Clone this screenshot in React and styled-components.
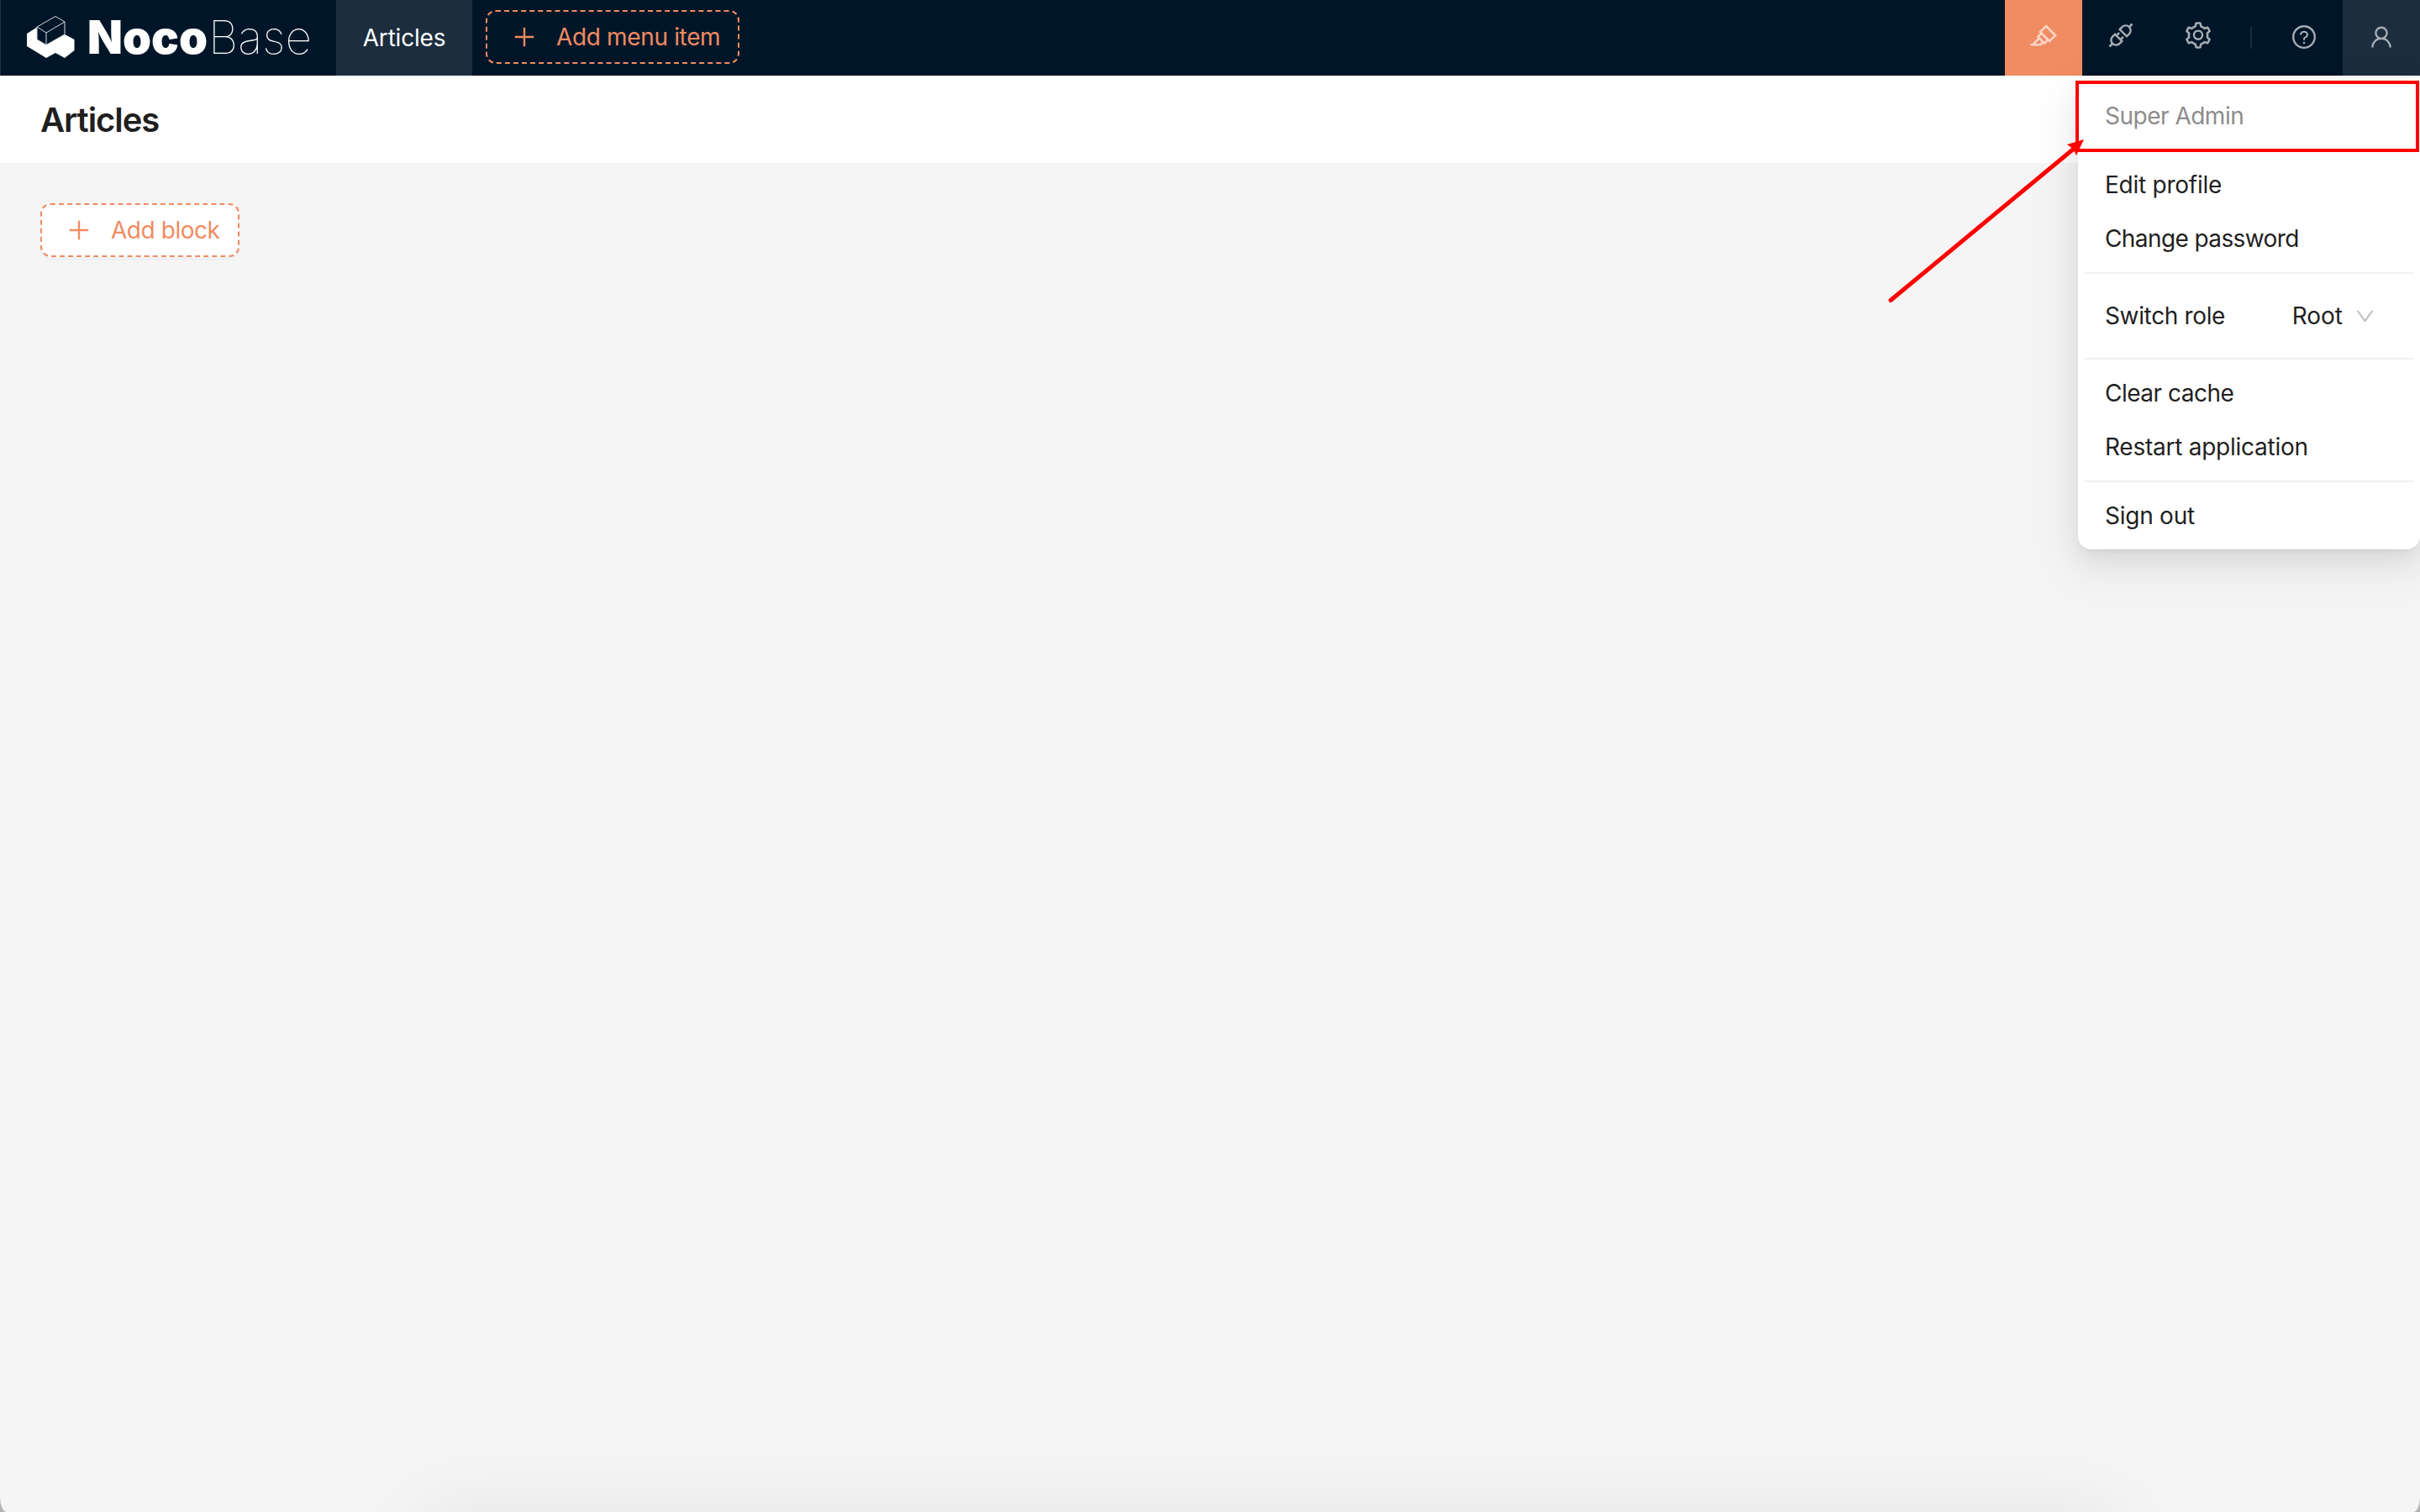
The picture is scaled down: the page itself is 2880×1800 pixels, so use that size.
import React from 'react';
import styled, {createGlobalStyle} from 'styled-components';
import {
  AiOutlineApi,
  AiOutlineDown,
  AiOutlineHighlight,
  AiOutlinePlus,
  AiOutlineQuestionCircle,
  AiOutlineSetting,
  AiOutlineUser,
} from 'react-icons/ai';

const GlobalStyle = createGlobalStyle`
  * {
    box-sizing: border-box;
  }

  body {
    margin: 0;
    background: #b4b4b4;
    color: #1f1f1f;
    font-family: Inter, "Liberation Sans", sans-serif;
    font-size: 28px;
  }
`;

const Window = styled.div`
  position: relative;
  display: flex;
  flex-direction: column;
  width: 2880px;
  height: 1800px;
  overflow: hidden;
  background: #f5f5f5;
  border-radius: 0 0 8px 8px / 0 0 18px 18px;
`;

const Header = styled.header`
  display: flex;
  height: 90px;
  background: #001628;
  box-shadow: inset 1px 0 rgba(255, 255, 255, 0.12), inset 0 -1px #000c1c;
`;

const LogoLink = styled.div`
  width: 400px;
  padding: 4px 0 0 32px;

  svg {
    display: block;
  }
`;

const Tab = styled.div`
  display: flex;
  align-items: center;
  justify-content: center;
  width: 162px;
  height: 90px;
  padding-bottom: 1px;
  background: #1c2d3e;
  color: #fff;
  letter-spacing: -0.2px;
`;

const DashedButton = styled.button`
  display: flex;
  align-items: center;
  width: ${({$width}) => $width}px;
  height: 64px;
  padding: 0 0 0 28px;
  border: 2px dashed #f18b62;
  border-radius: 12px;
  background: ${({$filled}) => $filled ? '#fff' : 'transparent'};
  box-shadow: ${({$filled}) => $filled ? '0 4px 0 rgba(0, 0, 0, 0.02)' : 'none'};
  color: #f18b62;
  font: inherit;
  letter-spacing: ${({$spacing}) => $spacing || 0}px;
  white-space: nowrap;

  svg {
    flex: none;
    margin-right: 22px;
  }
`;

const MenuButton = styled(DashedButton)`
  margin: 12px 0 0 16px;
`;

const Actions = styled.div`
  display: flex;
  margin-left: auto;
`;

const Action = styled.div`
  display: flex;
  justify-content: center;
  width: 92px;
  height: 90px;
  padding-top: ${({$top}) => $top || 24}px;
  background: ${({$background}) => $background || 'transparent'};
  color: ${({$bright}) => $bright ? 'rgba(255, 255, 255, 0.65)' : '#a6adb4'};
`;

const Separator = styled.div`
  width: 2px;
  height: 26px;
  margin: 32px 16px 0;
  background: #1a2c3e;
`;

const PageHeader = styled.div`
  display: flex;
  align-items: center;
  height: 104px;
  padding: 2px 48px 0;
  background: #fff;
`;

const Title = styled.h1`
  margin: 0;
  font-size: 40px;
  font-weight: 600;
  line-height: 56px;
  letter-spacing: -1.05px;
`;

const Content = styled.main`
  flex: 1;
  padding: 48px;
`;

const Menu = styled.div`
  position: absolute;
  top: 98px;
  right: 0;
  width: 407px;
  padding: 8px;
  background: #fff;
  border-radius: 16px;
  box-shadow: 0 12px 32px 0 rgba(0, 0, 0, 0.08), 0 6px 12px -8px rgba(0, 0, 0, 0.12), 0 18px 56px 16px rgba(0, 0, 0, 0.05);
`;

const MenuItem = styled.div`
  display: flex;
  align-items: center;
  height: ${({$height}) => $height || 64}px;
  padding: 0 24px;
  color: ${({$disabled}) => $disabled ? '#8c8c8c' : '#1f1f1f'};
  letter-spacing: ${({$spacing}) => $spacing || 0}px;
`;

const Divider = styled.div`
  height: 2px;
  margin: 8px 0;
  background: #f0f0f0;
`;

const Role = styled.div`
  display: flex;
  align-items: center;
  gap: 13px;
  margin-left: auto;
  padding-right: 20px;
  letter-spacing: 0;

  svg {
    color: #bfbfbf;
  }
`;

const Highlight = styled.div`
  position: absolute;
  top: 96px;
  left: 2470px;
  width: 409px;
  height: 85px;
  border: 4px solid #ff0000;
`;

const Arrow = styled.svg`
  position: absolute;
  top: 160px;
  left: 2240px;
`;

const DockShadow = styled.div`
  position: absolute;
  top: 1800px;
  left: 500px;
  width: 2020px;
  height: 100px;
  box-shadow: 0 0 90px rgba(0, 0, 0, 0.07);
`;

const Logo = () => (
  <svg width="350" height="80" viewBox="0 -14 350 80">
    <path
      d="M0 22 L12 14.5 V29 L23 35 L45 23 L56.500 29 V42 L45 51 L34 45 L23 51 L0 37 Z"
      fill="#fff"
    />
    <path
      d="M12 14 L34 1.500 L45 8 V23 L23 35.500 L12 29 Z M12 14 L23 21 L45 8 M23 21 V35"
      fill="#001628"
      stroke="#d5d9dd"
      strokeWidth="1"
    />
    <text x="72" y="45.500" fill="#fff" fontFamily="Inter" fontSize="54.500" fontWeight="900" textLength="143" lengthAdjust="spacingAndGlyphs">Noco</text>
    <text x="216" y="45.500" fill="#fff" fontFamily="Inter" fontSize="54.500" fontWeight="100" textLength="123" lengthAdjust="spacingAndGlyphs">Base</text>
  </svg>
);

const App = () => (
  <>
    <GlobalStyle />
    <Window>
      <Header>
        <LogoLink><Logo /></LogoLink>
        <Tab>Articles</Tab>
        <MenuButton $width={302} $spacing={-0.35}>
          <AiOutlinePlus size={32} />
          Add menu item
        </MenuButton>
        <Actions>
          <Action $background="#f18b62" $bright><AiOutlineHighlight size={36} /></Action>
          <Action><AiOutlineApi size={36} /></Action>
          <Action><AiOutlineSetting size={36} /></Action>
          <Separator />
          <Action $top={28}><AiOutlineQuestionCircle size={32} /></Action>
          <Action $top={28} $background="#1c2d3e"><AiOutlineUser size={32} /></Action>
        </Actions>
      </Header>
      <PageHeader>
        <Title>Articles</Title>
      </PageHeader>
      <Content>
        <DashedButton $width={237} $spacing={-0.45} $filled>
          <AiOutlinePlus size={32} />
          Add block
        </DashedButton>
      </Content>
      <Menu>
        <MenuItem $disabled $spacing={-0.5}>Super Admin</MenuItem>
        <Divider />
        <MenuItem $spacing={-0.25}>Edit profile</MenuItem>
        <MenuItem $spacing={-0.6}>Change password</MenuItem>
        <Divider />
        <MenuItem $height={84} $spacing={-0.35}>
          Switch role
          <Role>
            Root
            <AiOutlineDown size={27} />
          </Role>
        </MenuItem>
        <Divider />
        <MenuItem $spacing={-0.5}>Clear cache</MenuItem>
        <MenuItem $spacing={-0.25}>Restart application</MenuItem>
        <Divider />
        <MenuItem $spacing={-0.25}>Sign out</MenuItem>
      </Menu>
      <Highlight />
      <Arrow width="250" height="210" viewBox="0 0 250 210">
        <path d="M10 197.500 L228 17" stroke="#ff0000" strokeWidth="5" strokeLinecap="round" />
        <path d="M240 6 L220 12 L227 17 L231 25 Z" fill="#ff0000" />
      </Arrow>
      <DockShadow />
    </Window>
  </>
);

export {App as default};
